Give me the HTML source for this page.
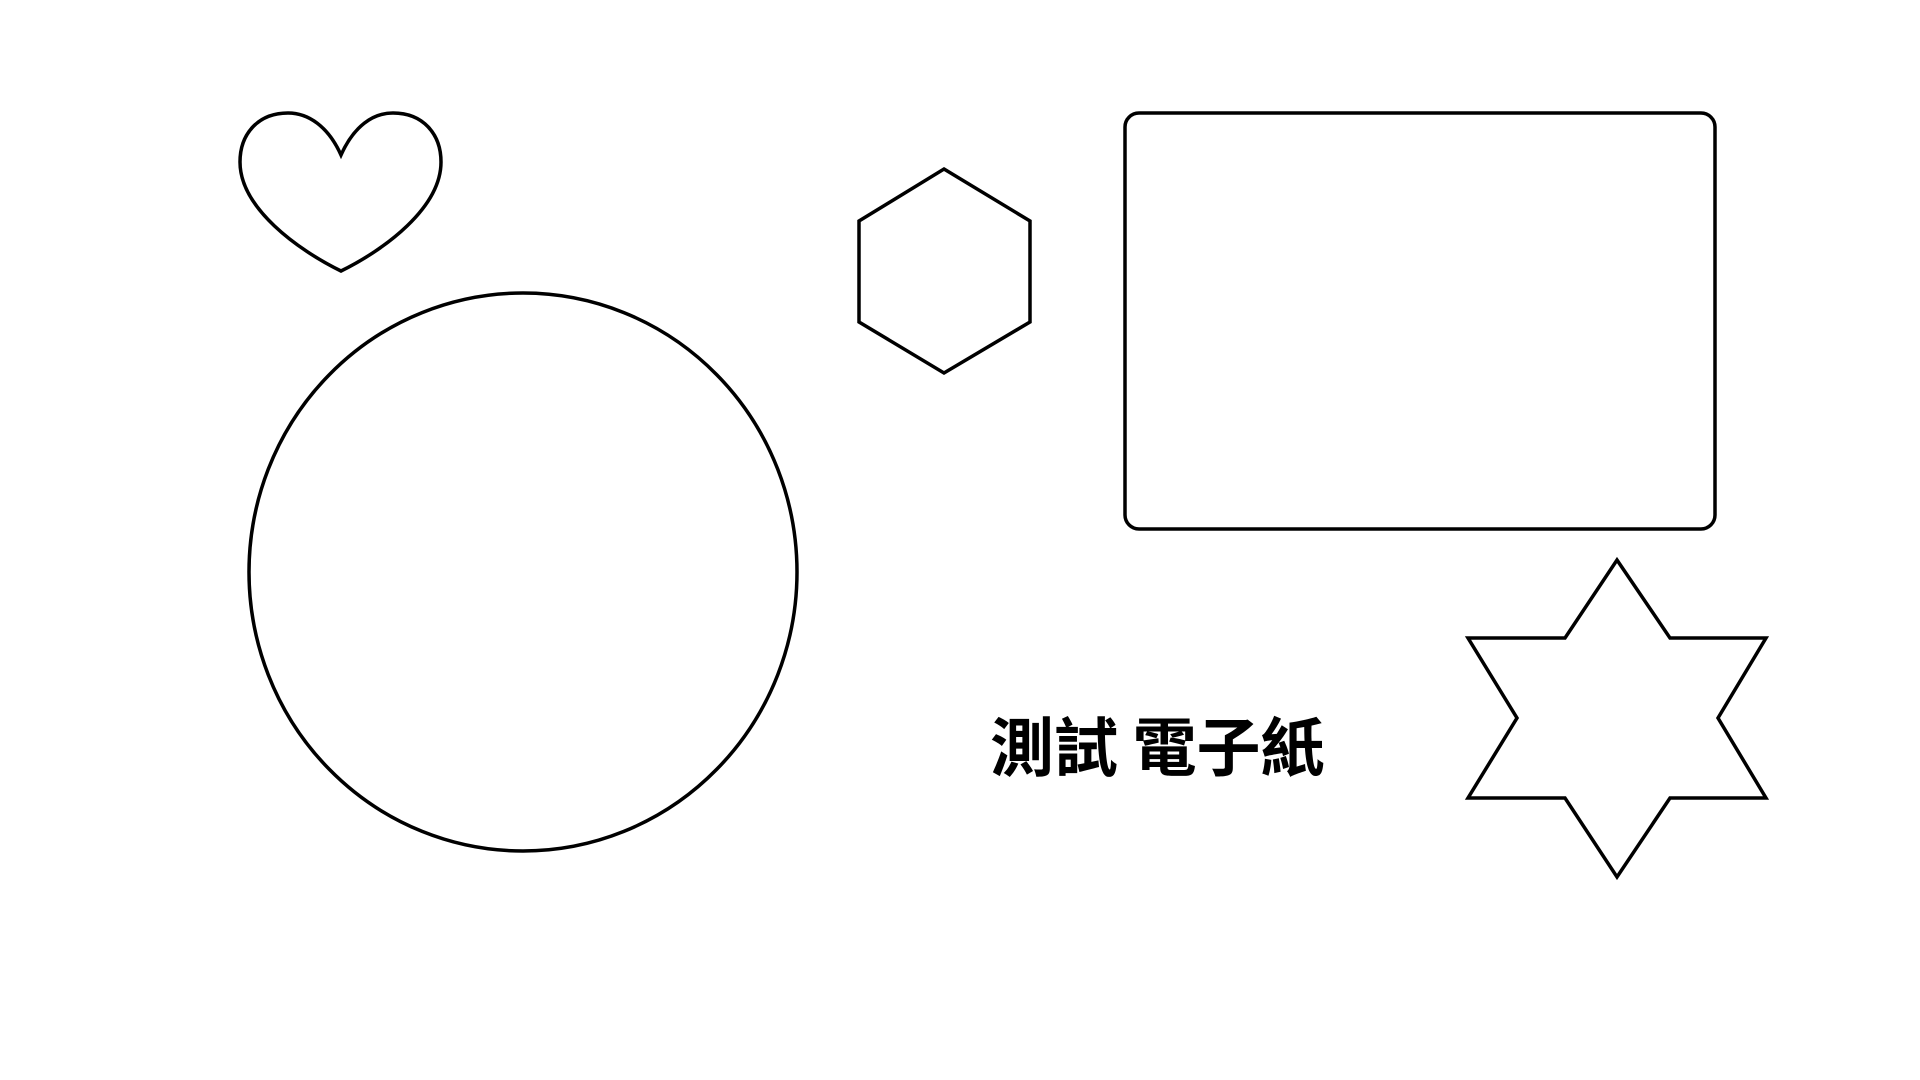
<!DOCTYPE html>
<html><head><meta charset="utf-8"><style>
html,body{margin:0;padding:0;background:#fff;width:1920px;height:1080px;overflow:hidden}
svg{position:absolute;left:0;top:0}
.t{position:absolute;left:990px;top:712px;font-family:"WenQuanYi Zen Hei","Noto Sans CJK TC",sans-serif;font-size:64px;letter-spacing:0px;line-height:1;font-weight:bold;color:#000;white-space:pre}
</style></head><body>
<svg width="1920" height="1080" viewBox="0 0 1920 1080">
<g fill="none" stroke="#000" stroke-width="3.5" stroke-linejoin="miter">
<path d="M341,155 C328,126 308,113 288,113 C258,113 240,134 240,162 C240,208 298,250 341,271 C384,250 441,208 441,162 C441,134 423,113 393,113 C373,113 354,126 341,155 Z"/>
<polygon points="944,169 1030,221 1030,322 944,373 859,322 859,221"/>
<rect x="1125" y="113" width="590" height="416" rx="14" ry="14"/>
<ellipse cx="523" cy="572" rx="274" ry="279"/>
<polygon points="1617,560 1670,638 1766,638 1718,718 1766,798 1670,798 1617,877 1565,798 1468,798 1517,718 1468,638 1565,638"/>
</g>
</svg>
<div class="t">測試 電子紙</div>
</body></html>
